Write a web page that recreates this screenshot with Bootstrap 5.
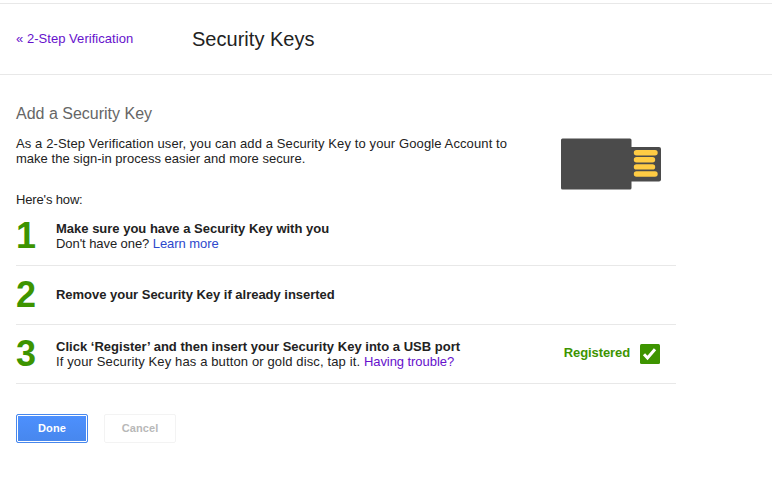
<!DOCTYPE html>
<html lang="en">
<head>
<meta charset="utf-8">
<meta name="viewport" content="width=device-width, initial-scale=1">
<title>Security Keys</title>
<link href="https://cdn.jsdelivr.net/npm/bootstrap@5.3.0/dist/css/bootstrap.min.css" rel="stylesheet">
<style>
body{font:13px/15px "Liberation Sans",Arial,sans-serif;color:#222;background:#fff;letter-spacing:.11px}
a{text-decoration:none;color:#2d48cc}
a.seen{color:#61c}
b{letter-spacing:0}
.topbar{margin-top:3px;height:72px;border:solid #e8e8e8;border-width:1px 0}
.back{width:176px;letter-spacing:.04px;padding-bottom:2px}
.topbar h1{font-size:20px;line-height:24px;font-weight:400;letter-spacing:.02px}
.page{width:660px;margin-left:16px;padding-top:29px}
.page h2{font-size:16px;line-height:20px;font-weight:400;color:#666;letter-spacing:0;margin-bottom:12px}
.intro{height:56px}
.intro svg{margin-right:15px;margin-top:2px}
.second{letter-spacing:.02px}
.how{letter-spacing:-.15px}
.step{height:59px;border-bottom:1px solid #e8e8e8}
.num{width:40px;font-size:36px;line-height:58px;font-weight:700;color:#3d9400;letter-spacing:0}
.line-one{letter-spacing:-.07px}
.single{padding-bottom:2px;letter-spacing:-.02px}
.long{letter-spacing:.02px}
.tip{letter-spacing:.13px}
.tip a{letter-spacing:-.06px}
.reg{color:#3d9400;padding-bottom:4px;letter-spacing:-.1px}
.check{margin-left:10px}
.actions{padding-top:30px}
.actions .btn{width:72px;height:29px;padding:0;border-radius:2px;font-size:11px;line-height:27px;font-weight:700;letter-spacing:.1px}
.actions .btn-done{color:#fff;border:1px solid #4787ed;background:linear-gradient(#4d90fe,#4787ed);box-shadow:inset 0 0 0 1px #fff}
.actions .btn-off{color:#b8b8b8;border:1px solid #f3f3f3;background:#fff}
</style>
<script src="https://cdn.jsdelivr.net/npm/bootstrap@5.3.0/dist/js/bootstrap.bundle.min.js"></script>
</head>
<body>
<header class="topbar d-flex align-items-center ps-3">
  <div class="back"><a class="seen" href="#">« 2-Step Verification</a></div>
  <h1 class="m-0">Security Keys</h1>
</header>
<main class="page">
  <h2 class="mt-0">Add a Security Key</h2>
  <div class="intro d-flex justify-content-between">
    <p class="m-0 text-nowrap">As a 2-Step Verification user, you can add a Security Key to your Google Account to<br><span class="second">make the sign-in process easier and more secure.</span></p>
    <svg width="100" height="52" viewBox="0 0 100 52" aria-hidden="true">
      <rect y=".5" width="70.500" height="51" rx="1.5" fill="#4b4b4b"/>
      <path d="M70 9h28q2 0 2 2v30.500q0 2-2 2H70z" fill="#4b4b4b"/>
      <path d="M75.500 14.700h18.500M75.500 21.800h16M75.500 28.900h16M75.500 36h18.500" stroke="#fc4" stroke-width="5.400" stroke-linecap="round"/>
    </svg>
  </div>
  <p class="m-0 how">Here's how:</p>
  <section class="step d-flex align-items-center">
    <div class="num">1</div>
    <div><b>Make sure you have a Security Key with you</b><br><span class="line-one">Don't have one? <a href="#">Learn more</a></span></div>
  </section>
  <section class="step d-flex align-items-center">
    <div class="num">2</div>
    <b class="single">Remove your Security Key if already inserted</b>
  </section>
  <section class="step d-flex align-items-center">
    <div class="num">3</div>
    <div><b class="long">Click ‘Register’ and then insert your Security Key into a USB port</b><br><span class="tip">If your Security Key has a button or gold disc, tap it. <a class="seen" href="#">Having trouble?</a></span></div>
    <div class="ms-auto d-flex align-items-center me-3">
      <b class="reg">Registered</b>
      <svg class="check" width="20" height="20" viewBox="0 0 20 20" aria-hidden="true"><rect width="20" height="20" rx="1.500" fill="#3d9400"/><path d="M4 10.300l3.500 3.700L15 5.300" fill="none" stroke="#fff" stroke-width="3"/></svg>
    </div>
  </section>
  <div class="actions d-flex gap-3">
    <button class="btn btn-done" type="button">Done</button>
    <button class="btn btn-off" type="button">Cancel</button>
  </div>
</main>
</body>
</html>
